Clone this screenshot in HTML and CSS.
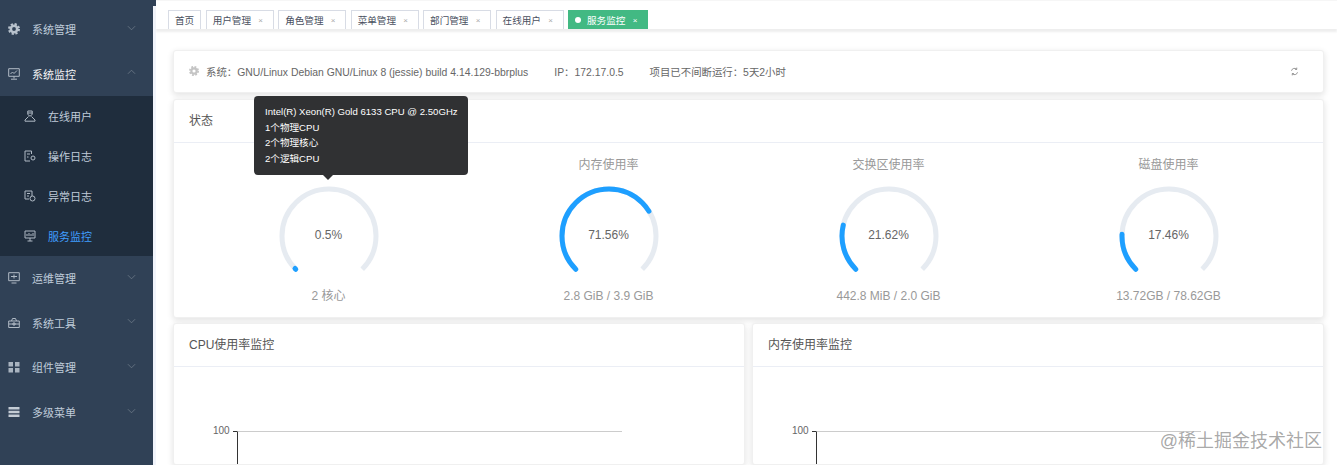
FILE: index.html
```html
<!DOCTYPE html>
<html lang="zh-CN">
<head>
    <meta charset="UTF-8">
    <meta name="viewport" content="width=device-width, initial-scale=1.0">
    <title>服务监控</title>
    <link rel="stylesheet" href="styles.css">
</head>
<body>
    <div class="app">
        <div class="sidebar">
            <div class="menu-item">
                <svg class="menu-icon" viewBox="0 0 12 12"><circle class="gear-ring" cx="6" cy="6" r="3.2"/><circle class="gear-teeth" cx="6" cy="6" r="5" stroke-dasharray="2.2 1.73"/></svg>
                <span class="menu-title">系统管理</span>
                <svg class="arrow" viewBox="0 0 10 6"><path d="M1 1l4 4 4-4"/></svg>
            </div>
            <div class="menu-item open">
                <svg class="menu-icon" viewBox="0 0 12 12"><path class="line" d="M.7.7h10.6v7.6H.7zM6 8.3v2.2M3 11.2h6M2.5 6l2-2 1.5 1.5 3-3"/></svg>
                <span class="menu-title">系统监控</span>
                <svg class="arrow" viewBox="0 0 10 6"><path d="M1 5l4-4 4 4"/></svg>
            </div>
            <div class="submenu">
                <div class="sub-item">
                    <svg class="sub-icon" viewBox="0 0 12 12"><path class="line" d="M3.8 1h4.4v3.5L6 6.2 3.8 4.5zM4.5 6.5 1 10v1.2h10V10L7.5 6.5M3.8 3h4.4"/></svg>
                    <span>在线用户</span>
                </div>
                <div class="sub-item">
                    <svg class="sub-icon" viewBox="0 0 12 12"><path class="line" d="M7.5 1H1v10h5M7.5 1v3M3 4h3M3 7h1.5"/><circle class="line" cx="9" cy="8" r="2"/></svg>
                    <span>操作日志</span>
                </div>
                <div class="sub-item">
                    <svg class="sub-icon" viewBox="0 0 12 12"><path class="line" d="M1 1h7v5M1 1v8h4M3 3.5h3M3 6h2"/><circle class="line" cx="8.5" cy="8.5" r="2.5"/></svg>
                    <span>异常日志</span>
                </div>
                <div class="sub-item active">
                    <svg class="sub-icon" viewBox="0 0 12 12"><path class="line" d="M1 1h10v7H1zM6 8v3M3.5 11h5M3 6V4M5 6V3M7 6V4M9 6V3"/></svg>
                    <span>服务监控</span>
                </div>
            </div>
            <div class="menu-item">
                <svg class="menu-icon" viewBox="0 0 12 12"><path class="line" d="M.7.7h10.6v8H.7zM3.5 11h5M3 4.5h6M6 2.5v4"/></svg>
                <span class="menu-title">运维管理</span>
                <svg class="arrow" viewBox="0 0 10 6"><path d="M1 1l4 4 4-4"/></svg>
            </div>
            <div class="menu-item">
                <svg class="menu-icon" viewBox="0 0 12 12"><path class="line" d="M.7 4h10.6v6.5H.7zM3.5 4l1-2.500h3l1 2.500M.7 7h10.6M5 6h2v2H5z"/></svg>
                <span class="menu-title">系统工具</span>
                <svg class="arrow" viewBox="0 0 10 6"><path d="M1 1l4 4 4-4"/></svg>
            </div>
            <div class="menu-item">
                <svg class="menu-icon" viewBox="0 0 12 12"><path fill="#a9b4c0" d="M.5 1H5v4.5H.5zM7 1h4.5v4.5H7zM.5 7H5v4.5H.5zM7 7h4.5v4.5H7z"/></svg>
                <span class="menu-title">组件管理</span>
                <svg class="arrow" viewBox="0 0 10 6"><path d="M1 1l4 4 4-4"/></svg>
            </div>
            <div class="menu-item">
                <svg class="menu-icon" viewBox="0 0 12 12"><path fill="#c4ccd5" d="M.5 1h11v2.5H.5zM.5 4.8h11v2.5H.5zM.5 8.6h11v2.5H.5z"/></svg>
                <span class="menu-title">多级菜单</span>
                <svg class="arrow" viewBox="0 0 10 6"><path d="M1 1l4 4 4-4"/></svg>
            </div>
        </div>

        <div class="main">
            <div class="tags-bar">
                <span class="tag">首页</span>
                <span class="tag">用户管理<i>×</i></span>
                <span class="tag">角色管理<i>×</i></span>
                <span class="tag">菜单管理<i>×</i></span>
                <span class="tag">部门管理<i>×</i></span>
                <span class="tag">在线用户<i>×</i></span>
                <span class="tag current"><b></b>服务监控<i>×</i></span>
            </div>

            <div class="content">
                <div class="card sys-card">
                    <svg class="sys-icon" viewBox="0 0 12 12"><circle class="gear-ring" cx="6" cy="6" r="3.2"/><circle class="gear-teeth" cx="6" cy="6" r="5" stroke-dasharray="2.2 1.73"/></svg>
                    <span class="sys-text sys-os">系统：GNU/Linux Debian GNU/Linux 8 (jessie) build 4.14.129-bbrplus</span>
                    <span class="sys-text sys-ip">IP：172.17.0.5</span>
                    <span class="sys-text">项目已不间断运行：5天2小时</span>
                    <svg class="refresh" viewBox="0 0 12 12"><path d="M2 5a4 4 0 0 1 6.8-2M10 7a4 4 0 0 1-6.8 2M9 .8v2.4H6.7M3 11.2V8.8h2.3"/></svg>
                </div>

                <div class="card status-card">
                    <div class="card-head">状态</div>
                    <div class="gauges">
                        <div class="gauge-box">
                            <div class="gauge-title">CPU使用率</div>
                            <div class="gauge">
                                <svg viewBox="0 0 100 100"><path class="track" pathLength="100" d="M16.77 83.23A47 47 0 1 1 83.23 83.23"/><path class="value" pathLength="100" stroke-dasharray="0.5 100" d="M16.77 83.23A47 47 0 1 1 83.23 83.23"/></svg>
                                <span>0.5%</span>
                            </div>
                            <div class="gauge-foot">2 核心</div>
                            <div class="tooltip">
                                <div>Intel(R) Xeon(R) Gold 6133 CPU @ 2.50GHz</div>
                                <div>1个物理CPU</div>
                                <div>2个物理核心</div>
                                <div>2个逻辑CPU</div>
                            </div>
                        </div>
                        <div class="gauge-box">
                            <div class="gauge-title">内存使用率</div>
                            <div class="gauge">
                                <svg viewBox="0 0 100 100"><path class="track" pathLength="100" d="M16.77 83.23A47 47 0 1 1 83.23 83.23"/><path class="value" pathLength="100" stroke-dasharray="71.56 100" d="M16.77 83.23A47 47 0 1 1 83.23 83.23"/></svg>
                                <span>71.56%</span>
                            </div>
                            <div class="gauge-foot">2.8 GiB / 3.9 GiB</div>
                        </div>
                        <div class="gauge-box">
                            <div class="gauge-title">交换区使用率</div>
                            <div class="gauge">
                                <svg viewBox="0 0 100 100"><path class="track" pathLength="100" d="M16.77 83.23A47 47 0 1 1 83.23 83.23"/><path class="value" pathLength="100" stroke-dasharray="21.62 100" d="M16.77 83.23A47 47 0 1 1 83.23 83.23"/></svg>
                                <span>21.62%</span>
                            </div>
                            <div class="gauge-foot">442.8 MiB / 2.0 GiB</div>
                        </div>
                        <div class="gauge-box">
                            <div class="gauge-title">磁盘使用率</div>
                            <div class="gauge">
                                <svg viewBox="0 0 100 100"><path class="track" pathLength="100" d="M16.77 83.23A47 47 0 1 1 83.23 83.23"/><path class="value" pathLength="100" stroke-dasharray="17.46 100" d="M16.77 83.23A47 47 0 1 1 83.23 83.23"/></svg>
                                <span>17.46%</span>
                            </div>
                            <div class="gauge-foot">13.72GB / 78.62GB</div>
                        </div>
                    </div>
                </div>

                <div class="charts">
                    <div class="card chart-card">
                        <div class="card-head">CPU使用率监控</div>
                        <div class="chart">
                            <span class="y-label">100</span>
                            <div class="plot"></div>
                        </div>
                    </div>
                    <div class="card chart-card">
                        <div class="card-head">内存使用率监控</div>
                        <div class="chart">
                            <span class="y-label">100</span>
                            <div class="plot"></div>
                        </div>
                    </div>
                </div>
            </div>
        </div>
    </div>
    <div class="watermark">@稀土掘金技术社区</div>
</body>
</html>
```

FILE: styles.css
```css
* {
    box-sizing: border-box;
    margin: 0;
    padding: 0;
}

html, body {
    height: 465px;
    overflow: hidden;
}

body {
    font-family: "Liberation Sans", "Noto Sans CJK SC", sans-serif;
    background-color: #fff;
    color: #666;
}

.app {
    display: flex;
    height: 465px;
}

/* Sidebar */
.sidebar {
    width: 153px;
    flex-shrink: 0;
    padding-top: 6.8px;
    background-color: #304156;
}

.menu-item {
    display: flex;
    align-items: center;
    height: 44.6px;
    padding-left: 8px;
    font-size: 11px;
    color: #bfcbd9;
}

.menu-item.open .menu-title {
    color: #f4f4f5;
}

.menu-icon {
    width: 12px;
    height: 12px;
    margin-right: 12px;
}

.menu-title {
    flex: 1;
}

.arrow {
    width: 9px;
    height: 6px;
    margin: 0 17px 3px 0;
    fill: none;
    stroke: #75828f;
    stroke-width: 0.8;
}

.line {
    fill: none;
    stroke: #b0bac5;
    stroke-width: 1;
}

.gear-ring {
    fill: none;
    stroke: #b8c2cd;
    stroke-width: 2.6;
}

.gear-teeth {
    fill: none;
    stroke: #b8c2cd;
    stroke-width: 2;
}

.sys-icon .gear-ring,
.sys-icon .gear-teeth {
    stroke: #c4c4c4;
}

.submenu {
    background-color: #1f2d3d;
}

.sub-item {
    display: flex;
    align-items: center;
    height: 40px;
    padding-left: 24px;
    font-size: 11px;
    color: #bfcbd9;
}

.sub-item.active {
    color: #409eff;
}

.sub-icon {
    width: 12px;
    height: 12px;
    margin-right: 12px;
}

/* Tags */
.main {
    position: relative;
    flex: 1;
    min-width: 0;
    background-color: #fff;
    border-left: 3px solid #f1f4fb;
}

.main::before {
    content: "";
    position: absolute;
    top: 0;
    left: -3px;
    width: 3px;
    height: 6px;
    background-color: #304156;
}

.tags-bar {
    display: flex;
    gap: 4.5px;
    height: 29px;
    padding: 9px 0 0 12px;
    border-top: 1px solid #f6f6f6;
    box-shadow: 0 3px 2px #eeeeee;
}

.tag {
    display: flex;
    align-items: center;
    height: 19px;
    padding: 0 6px;
    font-size: 9.6px;
    color: #495060;
    background-color: #fff;
    border: 1px solid #d8dce5;
    border-bottom: 0;
}

.tag i {
    width: 8px;
    margin: 0 2px 0 5.6px;
    font-style: normal;
    font-size: 8px;
    text-align: center;
    color: #aaa;
}

.tag.current {
    color: #fff;
    background-color: #42b983;
    border-color: #42b983;
}

.tag.current i {
    color: #fff;
}

.tag.current b {
    width: 6px;
    height: 6px;
    margin-right: 6px;
    border-radius: 50%;
    background-color: #fff;
}

/* Cards */
.content {
    padding: 21px 13px 0 17px;
}

.card {
    background-color: #fff;
    border: 1px solid #f0f0f0;
    border-radius: 3px;
    box-shadow: 0 2px 6px rgba(0, 0, 0, 0.12);
}

.sys-card {
    display: flex;
    align-items: center;
    height: 43px;
    padding: 0 24px 1px 15px;
}

.sys-icon {
    width: 10px;
    height: 10px;
    margin-right: 7px;
}

.sys-text {
    font-size: 10.4px;
    color: #666;
}

.sys-os,
.sys-ip {
    margin-right: 26px;
}

.refresh {
    width: 9px;
    height: 9px;
    margin-left: auto;
    fill: none;
    stroke: #777;
    stroke-width: 1;
}

.status-card {
    height: 219px;
    margin-top: 6px;
}

.card-head {
    height: 43px;
    padding-left: 15px;
    line-height: 42px;
    font-size: 12px;
    color: #555;
    border-bottom: 1px solid #ebeef5;
}

.gauges {
    display: grid;
    grid-template-columns: repeat(4, 280px);
    padding: 15px 0 0 14.5px;
}

.gauge-box {
    position: relative;
    text-align: center;
}

.gauge-title {
    font-size: 12px;
    line-height: 14px;
    color: #999;
}

.gauge {
    position: relative;
    width: 100px;
    height: 100px;
    margin: 14px auto 0;
}

.gauge svg {
    display: block;
    width: 100px;
    height: 100px;
}

.gauge path {
    fill: none;
    stroke-width: 5;
}

.track {
    stroke: #e6ebf1;
}

.value {
    stroke: #1e9fff;
    stroke-linecap: round;
}

.gauge span {
    position: absolute;
    top: 42px;
    left: 0;
    width: 100%;
    font-size: 12px;
    line-height: 14px;
    color: #666;
}

.gauge-foot {
    margin-top: 3px;
    font-size: 12px;
    line-height: 14px;
    color: #999;
}

.tooltip {
    position: absolute;
    top: -62px;
    left: 65.5px;
    width: 214px;
    height: 79px;
    padding: 8px 11px;
    border-radius: 4px;
    font-size: 9.6px;
    line-height: 15.5px;
    text-align: left;
    white-space: nowrap;
    color: #fff;
    background-color: #303133;
}

.tooltip::after {
    content: "";
    position: absolute;
    bottom: -5px;
    left: 69px;
    border-top: 5px solid #303133;
    border-left: 5px solid transparent;
    border-right: 5px solid transparent;
}

.charts {
    display: grid;
    grid-template-columns: 572px 572px;
    gap: 7px;
    margin-top: 5px;
}

.chart-card {
    height: 142px;
    overflow: hidden;
}

.chart {
    display: flex;
    align-items: flex-start;
    padding: 58px 0 0 39px;
}

.y-label {
    width: 20px;
    font-size: 10px;
    line-height: 12px;
    color: #666;
}

.plot {
    position: relative;
    width: 385px;
    height: 34px;
    margin: 6px 0 0 4px;
    border-top: 1px solid #ccc;
    border-left: 1px solid #333;
}

.plot::before {
    content: "";
    position: absolute;
    top: -1px;
    left: -5px;
    width: 4px;
    height: 1px;
    background-color: #333;
}

.watermark {
    position: absolute;
    right: 15px;
    bottom: 14px;
    font-size: 18px;
    line-height: 20px;
    color: rgba(120, 120, 120, 0.65);
}
```
